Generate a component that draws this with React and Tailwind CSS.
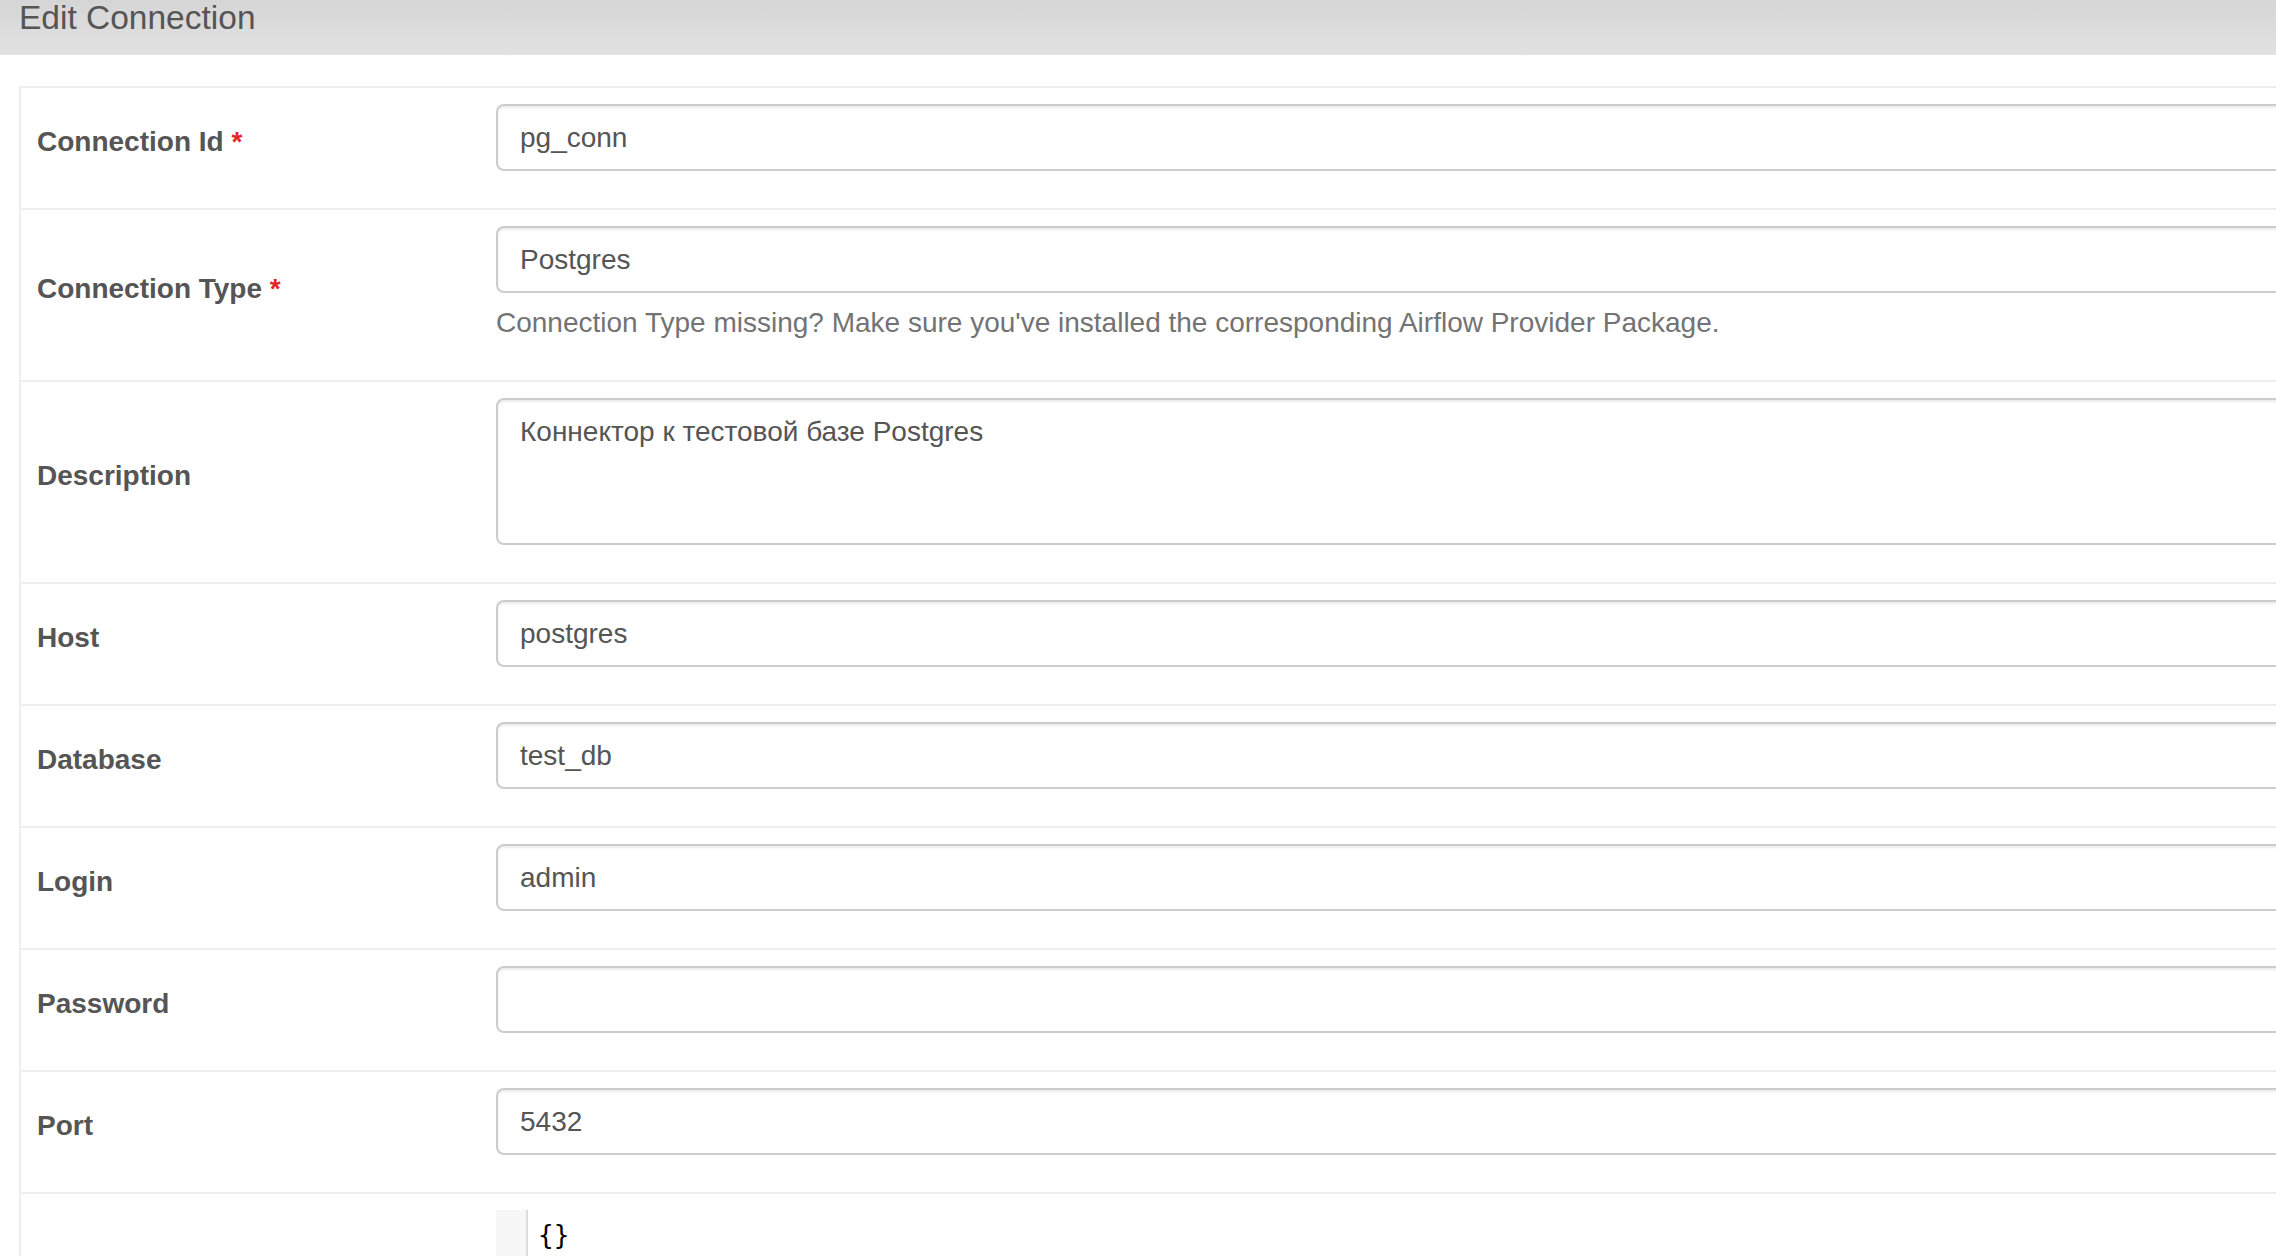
import React from "react";

function Field({ children, className = "" }) {
  return (
    <div
      className={
        "w-full rounded-[8px] border-2 border-[#cccccc] bg-white px-[22px] pt-[12px] pb-[10px] text-[28px] leading-[40px] text-[#555555] shadow-[inset_0_2px_2px_rgba(0,0,0,0.075)] " +
        className
      }
    >
      {children}
    </div>
  );
}

function Row({ label, required, children }) {
  return (
    <div className="flex border-t-2 border-[#eeeeee] pt-[16px] pb-[17px]">
      <div className="flex w-[459px] shrink-0 items-center pl-[16px]">
        <div className="mb-[12px] text-[28px] font-bold leading-[40px] text-[#555555]">
          {label}
          {required && <span className="text-[#e3261f]"> *</span>}
        </div>
      </div>
      <div className="flex-1 pl-[16px]">{children}</div>
    </div>
  );
}

export default function App() {
  const simple = [
    ["Host", "postgres"],
    ["Database", "test_db"],
    ["Login", "admin"],
    ["Password", ""],
    ["Port", "5432"],
  ];
  return (
    <div className="h-[1256px] w-[2276px] overflow-hidden bg-white font-['Liberation_Sans',Arial,sans-serif]">
      <div className="h-[55px] w-full bg-gradient-to-b from-[#d5d5d5] to-[#e2e2e2] pl-[19px]">
        <div className="pt-[1px] text-[33.5px] leading-[33px] text-[#555555]">Edit Connection</div>
      </div>
      <div className="ml-[19px] mt-[31px] w-[2600px] border-l-2 border-[#eeeeee]">
        <Row label="Connection Id" required>
          <Field className="mb-[20px] h-[67px]">pg_conn</Field>
        </Row>
        <Row label="Connection Type" required>
          <Field className="h-[67px]">Postgres</Field>
          <div className="mb-[20px] mt-[10px] text-[28px] leading-[40px] text-[#737373]">
            Connection Type missing? Make sure you've installed the corresponding Airflow Provider Package.
          </div>
        </Row>
        <Row label="Description">
          <Field className="mb-[20px] h-[147px]">Коннектор к тестовой базе Postgres</Field>
        </Row>
        {simple.map(([l, v]) => (
          <Row key={l} label={l}>
            <Field className="mb-[20px] h-[67px]">{v}</Field>
          </Row>
        ))}
        <div className="flex h-[300px] border-t-2 border-[#eeeeee] pt-[16px]">
          <div className="w-[459px] shrink-0" />
          <div className="flex flex-1 pl-[16px]">
            <div className="h-full w-[32px] border-r-2 border-[#dddddd] bg-[#f7f7f7]" />
            <div className="pl-[10px] pt-[8px] font-['DejaVu_Sans_Mono',monospace] text-[26px] leading-[34px] text-black">
              {"{}"}
            </div>
          </div>
        </div>
      </div>
    </div>
  );
}
